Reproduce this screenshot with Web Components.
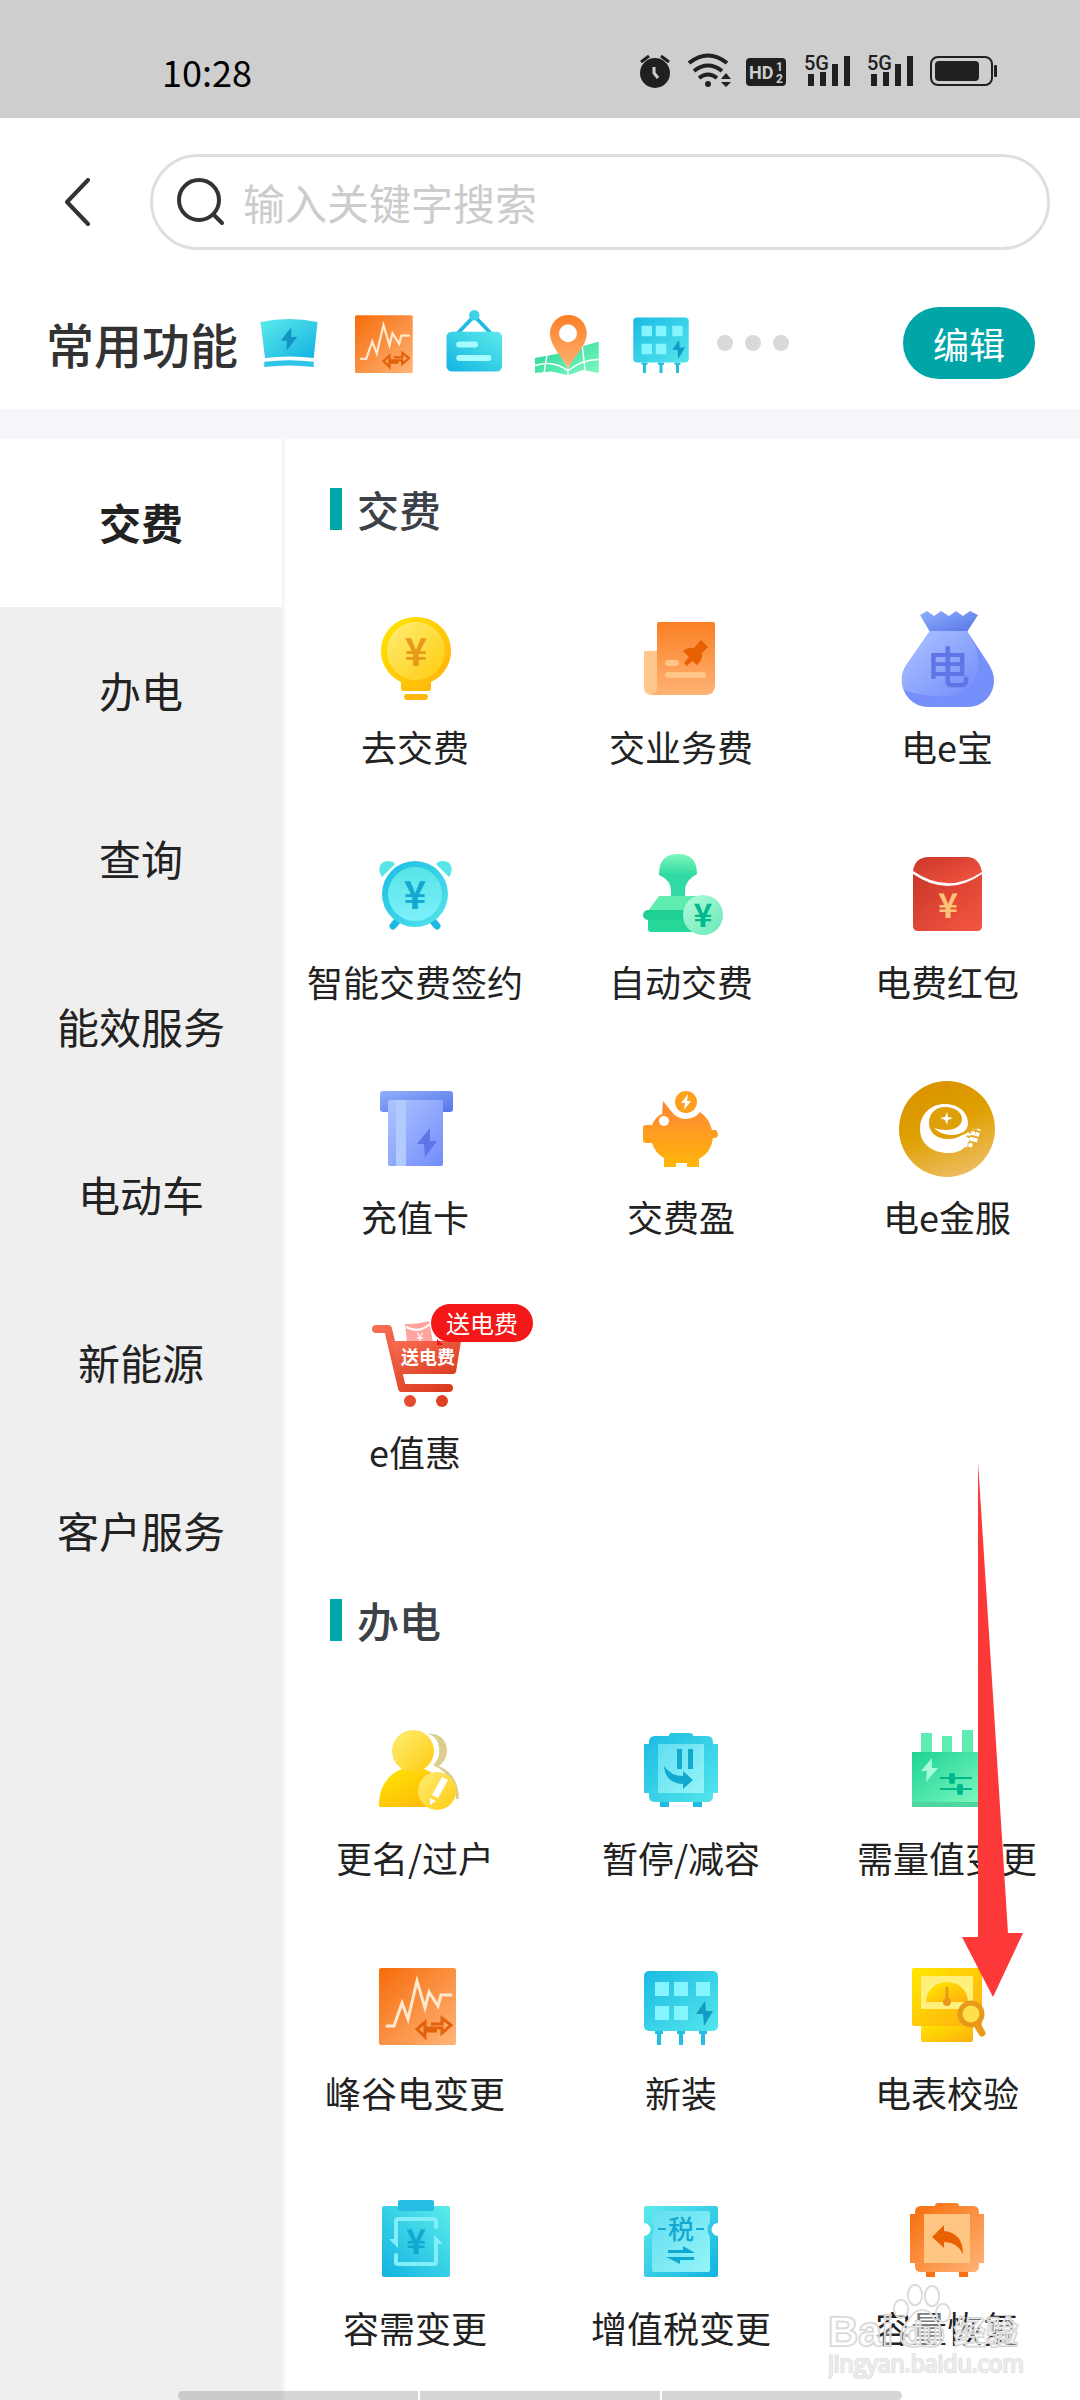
<!DOCTYPE html>
<html lang="zh-CN">
<head>
<meta charset="utf-8">
<meta name="viewport" content="width=device-width, initial-scale=1">
<title>常用功能</title>
<style>
  html, body {
    margin: 0;
    height: 100%;
  }
  body {
    font-family: "Noto Sans CJK SC", "Noto Sans", sans-serif;
    color: #222;
    background: #fff;
  }
</style>
</head>
<body>
<app-shell>
  <status-bar slot="top">10:28</status-bar>
  <search-header slot="top" placeholder="输入关键字搜索"></search-header>
  <shortcut-bar slot="top">
    <span slot="title">常用功能</span>
    <fn-icon name="basin"></fn-icon>
    <fn-icon name="wave"></fn-icon>
    <fn-icon name="board"></fn-icon>
    <fn-icon name="map"></fn-icon>
    <fn-icon name="install"></fn-icon>
    <span slot="action">编辑</span>
  </shortcut-bar>

  <side-menu slot="side">
    <menu-item active>交费</menu-item>
    <menu-item>办电</menu-item>
    <menu-item>查询</menu-item>
    <menu-item>能效服务</menu-item>
    <menu-item>电动车</menu-item>
    <menu-item>新能源</menu-item>
    <menu-item>客户服务</menu-item>
  </side-menu>

  <service-section>
    <span slot="title">交费</span>
    <service-tile icon="bulb">去交费</service-tile>
    <service-tile icon="doc">交业务费</service-tile>
    <service-tile icon="bag">电e宝</service-tile>
    <service-tile icon="alarm">智能交费签约</service-tile>
    <service-tile icon="stamp">自动交费</service-tile>
    <service-tile icon="packet">电费红包</service-tile>
    <service-tile icon="card">充值卡</service-tile>
    <service-tile icon="pig">交费盈</service-tile>
    <service-tile icon="gold">电e金服</service-tile>
    <service-tile icon="cart" badge="送电费">e值惠</service-tile>
  </service-section>

  <service-section>
    <span slot="title">办电</span>
    <service-tile icon="person">更名/过户</service-tile>
    <service-tile icon="pause">暂停/减容</service-tile>
    <service-tile icon="demand">需量值变更</service-tile>
    <service-tile icon="wave">峰谷电变更</service-tile>
    <service-tile icon="install">新装</service-tile>
    <service-tile icon="meter">电表校验</service-tile>
    <service-tile icon="clipboard">容需变更</service-tile>
    <service-tile icon="tax">增值税变更</service-tile>
    <service-tile icon="restore">容量恢复</service-tile>
  </service-section>

  <pointer-arrow slot="over"></pointer-arrow>
  <water-mark slot="over"></water-mark>
  <gesture-bar slot="over"></gesture-bar>
</app-shell>

<script>
(function() {
  // every icon instance gets its own copy, ids are scoped to the shadow root
  const DEFS = `
    <defs>
      <linearGradient id="yellow" x1="0" y1="0" x2="1" y2="1"><stop offset="0" stop-color="#ffe900"/><stop offset="1" stop-color="#ffae0e"/></linearGradient>
      <linearGradient id="lemon" x1="0" y1="0" x2="1" y2="1"><stop offset="0" stop-color="#ffee75"/><stop offset="1" stop-color="#ffcb0f"/></linearGradient>
      <linearGradient id="orange" x1="0" y1="0" x2="1" y2="1"><stop offset="0" stop-color="#f66c0a"/><stop offset="1" stop-color="#ffb478"/></linearGradient>
      <linearGradient id="peach" x1="0" y1="0" x2="0" y2="1"><stop offset="0" stop-color="#fa7f24"/><stop offset="1" stop-color="#ffb274"/></linearGradient>
      <linearGradient id="pigGrad" x1="0" y1="0" x2="0" y2="1"><stop offset="0" stop-color="#ff8538"/><stop offset="1" stop-color="#ffb60a"/></linearGradient>
      <linearGradient id="cyan" x1="0" y1="0" x2="1" y2="1"><stop offset="0" stop-color="#1abbe3"/><stop offset="1" stop-color="#55e6ec"/></linearGradient>
      <linearGradient id="cyanBack" x1="0" y1="0" x2="1" y2="1"><stop offset="0" stop-color="#5cebeb"/><stop offset="1" stop-color="#12b1e2"/></linearGradient>
      <linearGradient id="cyanUp" x1="0" y1="1" x2="1" y2="0"><stop offset="0" stop-color="#12b3e2"/><stop offset="1" stop-color="#5cebeb"/></linearGradient>
      <linearGradient id="cyanPale" x1="0" y1="0" x2="0" y2="1"><stop offset="0" stop-color="#57e4e6"/><stop offset="1" stop-color="#7df1fb"/></linearGradient>
      <linearGradient id="ice" x1="0" y1="0" x2="1" y2="1"><stop offset="0" stop-color="#62ddf2"/><stop offset="1" stop-color="#95f5f7"/></linearGradient>
      <linearGradient id="green" x1="0" y1="0" x2="1" y2="1"><stop offset="0" stop-color="#1bd393"/><stop offset="1" stop-color="#84fac3"/></linearGradient>
      <linearGradient id="greenDown" x1="0" y1="0" x2="0" y2="1"><stop offset="0" stop-color="#7ef7bd"/><stop offset="1" stop-color="#35dba2"/></linearGradient>
      <linearGradient id="mint" x1="0" y1="0" x2="1" y2="1"><stop offset="0" stop-color="#b4fbdc"/><stop offset="1" stop-color="#66e9b6"/></linearGradient>
      <linearGradient id="blue" x1="0" y1="0" x2="1" y2="1"><stop offset="0" stop-color="#90b0fd"/><stop offset="1" stop-color="#5474e6"/></linearGradient>
      <linearGradient id="sky" x1="0" y1="0" x2="1" y2="1"><stop offset="0" stop-color="#aec5ff"/><stop offset="1" stop-color="#728cfb"/></linearGradient>
      <linearGradient id="red" x1="0" y1="0" x2="1" y2="1"><stop offset="0" stop-color="#c93728"/><stop offset="1" stop-color="#f65643"/></linearGradient>
      <linearGradient id="cartGrad" x1="0" y1="0" x2="1" y2="1"><stop offset="0" stop-color="#f86e52"/><stop offset="1" stop-color="#da3b20"/></linearGradient>
      <linearGradient id="goldGrad" x1="0.3" y1="0" x2="0.7" y2="1"><stop offset="0.1" stop-color="#da9500"/><stop offset="0.45" stop-color="#dfa000"/><stop offset="1" stop-color="#edbe65"/></linearGradient>
    </defs>`;

  const yen = (x, y, size, fill) =>
    `<text x="${x}" y="${y}" font-size="${size}" font-weight="700" text-anchor="middle" fill="${fill}">¥</text>`;

  // cabinet outline shared by the pause and restore icons
  const cabinet = (grad, inner, foot) => `
    <path fill="${foot}" d="M27 78h9v7h-9zM60 78h9v7h-9z"/>
    <path fill="url(#${grad})" d="M36 14q0-3 3-3h18q3 0 3 3h14q6 0 6 6v2h5v49h-5v3q0 6-6 6H22q-6 0-6-6v-3h-5V22h5v-2q0-6 6-6z"/>
    <path fill="${inner}" d="M25 22h46v49H25z"/>`;

  const ICONS = {
    basin: `
      <path fill="url(#cyanBack)" d="M10 20Q48 12 86 20L81 68Q48 64 16 68z"/>
      <path fill="#2fc3e8" d="M15 73Q48 69 81 73V80Q48 76 15 80z"/>
      <path fill="#1594c4" d="M51 27L37 45H45V58L59 40H51z"/>`,
    wave: `
      <rect x="12" y="11" width="77" height="77" rx="2" fill="url(#orange)"/>
      <path fill="none" stroke="#ffe9cf" stroke-width="3" stroke-linecap="round" d="M20 69H27L35 46L41 62L50 24L58 51L62 35L71 49L74 38H84"/>
      <path fill="none" stroke="#e2620c" stroke-width="3" d="M64 67H75V61L84 68L75 76V71H58V65L50 72L58 80V74H70"/>`,
    board: `
      <path fill="none" stroke="#1fb9e4" stroke-width="5" d="M25 35L47 12L69 35"/>
      <circle cx="47" cy="11" r="7" fill="#3fd0e8"/>
      <rect x="10" y="33" width="74" height="53" rx="7" fill="url(#cyanUp)"/>
      <path fill="none" stroke="#a7fcff" stroke-width="8" stroke-linecap="round" d="M27 50H48M27 68H66"/>`,
    map: `
      <path fill="url(#green)" d="M4 68L36 62L48 82L62 54L89 46V88L68 84L48 91L26 86L4 88z"/>
      <path fill="none" stroke="#fff" stroke-width="2" d="M4 78Q28 70 48 85Q66 70 89 70M20 64L16 88M67 52L71 86M48 82V92"/>
      <path fill="url(#peach)" d="M48 82C42 68 24 53 24 35A24 24 0 0 1 73 35C73 53 54 68 48 82z"/>
      <circle cx="48" cy="35" r="12" fill="#fff"/>`,
    install: `
      <path fill="#24bde4" d="M22 74h8v3h-2v11h-4V77h-2zM44 74h8v3h-2v11h-4V77h-2zM66 74h8v3h-2v11h-4V77h-2z"/>
      <rect x="11" y="14" width="74" height="60" rx="5" fill="url(#cyan)"/>
      <path fill="#84f4ff" d="M22 25h14v14H22zM41 25h14v14H41zM63 25h14v14H63zM22 49h14v14H22zM41 49h14v14H41z"/>
      <path fill="#129bc6" d="M72 44L63 57H70L71 69L80 54H73z"/>`,
    bulb: `
      <path fill="url(#yellow)" d="M49 6A34 34 0 0 1 64 71V78Q64 80 62 80H36Q34 80 34 78V71A34 34 0 0 1 49 6z"/>
      <circle cx="49" cy="40" r="29" fill="url(#lemon)"/>
      <rect x="37" y="83" width="24" height="6" rx="3" fill="#ffb910"/>
      ${yen(49, 55, 38, "#e8991a")}`,
    doc: `
      <path fill="#ffc78a" d="M11 40H30V84H19Q11 84 11 76z"/>
      <path fill="url(#peach)" d="M26 11H80Q82 11 82 13V74Q82 84 72 84H18Q24 82 24 76V13Q24 11 26 11z"/>
      <path fill="none" stroke="#ffc584" stroke-width="6" stroke-linecap="round" d="M35 52H43M35 64H70"/>
      <path fill="#e86000" d="M68 29L75 36L69 42Q70 49 64 54L59 50L54 55L51 52L56 46L50 40Q55 36 61 37z"/>`,
    bag: `
      <path fill="url(#blue)" d="M21 4L28 0L35 5L42 0L50 5L57 0L64 5L71 0L79 4L68 21H31z"/>
      <path fill="#7690fb" d="M31 20H68L89 52Q95 61 95 69A26 26 0 0 1 69 96H29A26 26 0 0 1 3 69Q3 60 8 53z"/>
      <path fill="url(#sky)" d="M31 20H68L76 34Q80 46 79 57Q75 81 49 85Q24 86 5 79Q-1 66 8 53z"/>
      <text x="49" y="73" font-size="44" font-weight="500" text-anchor="middle" fill="#5f74e6">电</text>`,
    alarm: `
      <path fill="#5ae5e8" d="M28 18L15 31C10 24 12 15 21 15C24 15 27 16 28 18zM69 18L82 31C87 24 85 15 76 15C73 15 70 16 69 18z"/>
      <path fill="none" stroke="#1fb9e4" stroke-width="7" stroke-linecap="round" d="M31 74L26 80M65 74L70 80"/>
      <circle cx="48" cy="48" r="33" fill="url(#cyan)"/>
      <circle cx="48" cy="48" r="27" fill="url(#cyanPale)"/>
      ${yen(48, 63, 38, "#12a9d0")}`,
    stamp: `
      <path fill="#31d9a5" d="M26 28H64Q52 34 52 45V52H38V45Q38 34 26 29z"/>
      <path fill="url(#greenDown)" d="M26 28Q26 8 45 8Q64 8 64 28z"/>
      <path fill="#5fecb1" d="M26 50H64L77 65H15z"/>
      <rect x="15" y="66" width="62" height="20" rx="3" fill="#26d898"/>
      <rect x="10" y="64" width="70" height="10" rx="5" fill="#1fd195"/>
      <circle cx="70" cy="69" r="20" fill="url(#mint)"/>
      ${yen(70, 81, 32, "#00b88c")}`,
    packet: `
      <path fill="url(#red)" d="M14 28V80Q14 85 19 85H78Q83 85 83 80V28Q49 52 14 28z"/>
      <path fill="url(#red)" d="M14 25Q16 11 30 11H68Q80 11 83 26Q49 49 14 25z"/>
      ${yen(49, 72, 34, "#ffc277")}`,
    card: `
      <rect x="13" y="10" width="73" height="21" rx="3" fill="url(#blue)"/>
      <rect x="21" y="19" width="55" height="66" rx="2" fill="url(#sky)"/>
      <path fill="#b2cbff" d="M29 19h10v66H29z"/>
      <path fill="#5f74e6" d="M63 47L50 63H57L58 76L70 60H63z"/>`,
    pig: `
      <path fill="url(#pigGrad)" d="M30 20L38 30Q44 38 53 38Q63 37 67 31Q76 37 79 49H83Q87 54 83 57H80Q78 72 66 78V86H54V82H43V86H31V77Q22 72 19 62H13Q10 62 10 59V47Q10 44 13 44H19Q22 36 29 33z"/>
      <circle cx="31" cy="40" r="5" fill="#fff"/>
      <circle cx="53" cy="21" r="11" fill="#ffa01c"/>
      <path fill="#fff" d="M55 13L48 22H52L51 29L58 20H54z"/>`,
    gold: `
      <circle cx="48" cy="48" r="48" fill="url(#goldGrad)"/>
      <path fill="#fff" d="M46 23C60 23 69 32 69 42C69 50 62 55 52 56Q60 57 70 51L66 58L70 60L66 66Q60 72 50 72C32 72 21 62 21 48C21 33 32 23 46 23z"/>
      <path fill="#de9f08" d="M46 26C56 26 63 31 63 38C63 46 54 49 47 49Q40 49 35 47Q42 54 52 54Q62 54 68 48Q62 58 49 58C37 58 30 51 30 42C30 32 37 26 46 26z"/>
      <path fill="#fff" d="M48 31L49 36L54 37L49 39L48 44L46 39L41 37L46 36z"/>
      <path fill="none" stroke="#fff" stroke-width="4" stroke-dasharray="4 2" d="M66 66L70 52M71 66L75 48M76 61L80 48"/>`,
    cart: `
      <path fill="#ffa5a0" d="M38 8Q52 8 62 5L66 26H40z"/>
      <path fill="none" stroke="#fff" stroke-width="2" d="M39 11Q52 18 63 8"/>
      <text x="53" y="25" font-size="12" text-anchor="middle" fill="#fff">¥</text>
      <path fill="none" stroke="url(#cartGrad)" stroke-width="8" stroke-linecap="round" stroke-linejoin="round" d="M9 13H21L35 72H82"/>
      <path fill="url(#cartGrad)" d="M24 25H94L89 56Q88 58 86 58H32z"/>
      <circle cx="43" cy="85" r="6" fill="#e44b30"/>
      <circle cx="75" cy="85" r="6" fill="#de4024"/>
      <text x="61" y="48" font-size="18" font-weight="700" text-anchor="middle" fill="#fff">送电费</text>`,
    person: `
      <path fill="#dccf8e" d="M60 12C74 10 80 20 80 28C80 35 77 40 72 44C84 49 92 60 92 77H89C88 60 80 50 66 43C72 38 73 30 72 26C71 18 67 13 60 12z"/>
      <path fill="url(#yellow)" d="M12 85V82C12 60 28 45 46 45S80 60 80 82V85z"/>
      <circle cx="46" cy="29" r="21" fill="url(#lemon)"/>
      <circle cx="70" cy="69" r="19" fill="url(#lemon)"/>
      <path fill="#fff" d="M75 55L81 58L71 76L65 73zM63 76L69 79L63 83z"/>`,
    pause: `
      ${cabinet("cyan", "url(#ice)", "#1fb9e4")}
      <path fill="#12a9d0" d="M44 27h5v20h-5zM55 27h5v20h-5zM31 44Q38 54 50 54V49L60 58L50 67V62Q32 61 31 44z"/>`,
    demand: `
      <path fill="#5eecb2" d="M22 11h11v20H22zM43 14h10v17H43zM63 8h11v23H63z"/>
      <path fill="url(#green)" d="M13 30h72v55H13z"/>
      <path fill="#4fd6a0" d="M13 80h72v5H13z"/>
      <path fill="#a7fbd8" d="M33 36L22 49H28L27 60L39 46H33z"/>
      <path stroke="#00b88c" stroke-width="2" d="M41 56H73M41 67H73"/>
      <rect x="50" y="51" width="6" height="11" rx="2" fill="#00b88c"/>
      <rect x="58" y="62" width="6" height="11" rx="2" fill="#00b88c"/>`,
    meter: `
      <path fill="url(#yellow)" d="M22 66H74V83Q74 85 72 85H24Q22 85 22 83z"/>
      <rect x="13" y="11" width="70" height="58" rx="2" fill="url(#yellow)"/>
      <path fill="#fff07e" d="M22 19h52v33H22z"/>
      <path fill="url(#yellow)" d="M27 45A21 20 0 0 1 69 45z"/>
      <path stroke="#e8991a" stroke-width="3" d="M48 30V45"/>
      <circle cx="48" cy="45" r="4" fill="#e8991a"/>
      <path stroke="#e8991a" stroke-width="7" stroke-linecap="round" d="M77 66L83 76"/>
      <circle cx="72" cy="57" r="11" fill="#ffdf4a" stroke="#e8991a" stroke-width="5"/>`,
    clipboard: `
      <rect x="15" y="14" width="68" height="71" rx="2" fill="url(#cyanUp)"/>
      <rect x="31" y="8" width="36" height="11" rx="2" fill="#26bfe3"/>
      <path fill="none" stroke="#82eff8" stroke-width="4" stroke-linecap="round" d="M69 35V29Q69 27 67 27H31Q29 27 29 29V50M29 63V70Q29 72 31 72H67Q69 72 69 70V48"/>
      <path fill="#82eff8" d="M22 47H31V56zM67 43L76 52H67z"/>
      ${yen(49, 62, 34, "#12a9d0")}`,
    tax: `
      <path fill="url(#cyanBack)" d="M13 14H83Q85 14 85 16V31A6 6 0 0 0 85 44V83Q85 85 83 85H13Q11 85 11 83V44A6 6 0 0 0 11 31V16Q11 14 13 14z"/>
      <path fill="url(#ice)" d="M21 19H75Q77 19 77 21V30Q72 37 77 45V78Q77 80 75 80H21Q19 80 19 78V45Q24 37 19 30V21Q19 19 21 19z"/>
      <path fill="none" stroke="#12a9d0" stroke-width="2" d="M25 37H33M63 37H71"/>
      <path fill="#12a9d0" d="M35 58H50V54L62 61H35zM61 68H47V72L33 65H61z"/>
      <text x="48" y="47" font-size="26" font-weight="500" text-anchor="middle" fill="#12a9d0">税</text>`,
    restore: `
      ${cabinet("orange", "#ffc683", "#f8700f")}
      <path fill="#e86203" d="M33 45L45 33V39Q64 41 64 62Q58 50 45 50V56z"/>`
  };

  class BaseElement extends HTMLElement {
    constructor() {
      super();
      this.attachShadow({ mode: "open" });
    }
    connectedCallback() {
      this.shadowRoot.innerHTML = this.render();
    }
  }

  class AppShell extends BaseElement {
    render() {
      return `
        <style>
          :host {
            display: flex;
            flex-direction: column;
            position: relative;
            height: 100vh;
            overflow: hidden;
          }
          .body {
            flex: 1;
            min-height: 0;
            display: flex;
            border-top: 30px solid #f6f7fa;
          }
          main {
            flex: 1;
            min-width: 0;
            overflow-y: auto;
            scrollbar-width: none;
            box-shadow: inset 3px 0 #f5f8f8;
          }
        </style>
        <slot name="top"></slot>
        <div class="body">
          <slot name="side"></slot>
          <main><slot></slot></main>
        </div>
        <slot name="over"></slot>`;
    }
  }

  class StatusBar extends BaseElement {
    render() {
      const bars = x => `
        <text x="${x}" y="25" font-size="20" font-weight="500">5G</text>
        <path d="M${x + 4} 29h6v12h-6zM${x + 16} 27h6v14h-6zM${x + 28} 19h6v22h-6zM${x + 40} 11h6v30h-6z"/>`;
      return `
        <style>
          :host {
            display: flex;
            align-items: center;
            justify-content: space-between;
            height: 118px;
            padding: 24px 82px 0 162px;
            box-sizing: border-box;
            background: #cecece;
            color: #000;
            font-size: 36px;
            font-weight: 400;
            line-height: 50px;
          }
          svg {
            fill: #202020;
            font-family: "Liberation Sans Narrow", Roboto, sans-serif;
          }
        </style>
        <time><slot></slot></time>
        <svg width="358" height="52" viewBox="0 0 358 52" aria-hidden="true">
          <circle cx="15" cy="28" r="15"/>
          <path d="M1 17L9 11M29 17L21 11" stroke="#202020" stroke-width="3"/>
          <path d="M14 22V28L18 33" fill="none" stroke="#cecece" stroke-width="3"/>
          <path d="M49 18Q68 3 87 18M54 26Q68 15 82 26M59 33Q68 26 77 33" fill="none" stroke="#202020" stroke-width="4"/>
          <circle cx="68" cy="39" r="3"/>
          <path d="M86 28l5 6H81zM86 42l5-5H81z"/>
          <rect x="106" y="13" width="40" height="28" rx="4"/>
          <text x="109" y="34" font-size="18" font-weight="700" fill="#cecece">HD</text>
          <text x="136" y="26" font-size="12" font-weight="700" fill="#cecece">1</text>
          <text x="136" y="38" font-size="12" font-weight="700" fill="#cecece">2</text>
          ${bars(164)}
          ${bars(227)}
          <rect x="291" y="12" width="61" height="28" rx="7" fill="none" stroke="#202020" stroke-width="2"/>
          <rect x="295" y="16" width="44" height="20" rx="4"/>
          <rect x="354" y="20" width="3" height="12" rx="1"/>
        </svg>`;
    }
  }

  class SearchHeader extends BaseElement {
    render() {
      return `
        <style>
          :host {
            display: flex;
            align-items: center;
            padding: 36px 30px 0 54px;
          }
          button {
            width: 48px;
            height: 48px;
            margin-right: 48px;
            padding: 0;
            border: 0;
            background: none;
          }
          svg {
            display: block;
            flex: none;
            fill: none;
            stroke: #333;
            stroke-width: 4;
            stroke-linecap: round;
            stroke-linejoin: round;
          }
          label {
            flex: 1;
            display: flex;
            align-items: center;
            gap: 18px;
            height: 96px;
            padding: 0 24px;
            box-sizing: border-box;
            border: 3px solid #dfdfdf;
            border-radius: 48px;
          }
          input {
            flex: 1;
            min-width: 0;
            padding: 0;
            border: 0;
            outline: 0;
            background: none;
            color: #222;
            font: inherit;
            font-size: 42px;
            line-height: 60px;
          }
          input::placeholder { color: #ccc; }
        </style>
        <button type="button" aria-label="返回">
          <svg width="48" height="48" viewBox="0 0 48 48"><path d="M34 2L13 24L34 46"/></svg>
        </button>
        <label>
          <svg width="48" height="48" viewBox="0 0 48 48"><circle cx="22" cy="22" r="20"/><path d="M37 37L45 45"/></svg>
          <input type="search" aria-label="${this.getAttribute("placeholder")}" placeholder="${this.getAttribute("placeholder")}">
        </label>`;
    }
  }

  class ShortcutBar extends BaseElement {
    render() {
      return `
        <style>
          :host {
            --icon-size: 72px;
            display: flex;
            align-items: center;
            height: 159px;
            padding: 27px 45px 0 46px;
            box-sizing: border-box;
          }
          .wrap {
            flex: 1;
            display: flex;
            align-items: center;
          }
          h1 {
            margin: 0 15px 0 0;
            color: #333;
            font-size: 48px;
            font-weight: 500;
            line-height: 68px;
          }
          .icons, .dots {
            display: flex;
            gap: 21px;
          }
          .dots {
            gap: 12px;
            margin-left: 20px;
          }
          .dots i {
            width: 16px;
            height: 16px;
            border-radius: 50%;
            background: #d9d9d9;
          }
          button {
            width: 132px;
            height: 72px;
            padding: 0;
            border: 0;
            border-radius: 36px;
            background: #00a6a7;
            color: #fff;
            font: inherit;
            font-size: 36px;
            line-height: 50px;
          }
        </style>
        <div class="wrap">
          <h1><slot name="title"></slot></h1>
          <div class="icons"><slot></slot></div>
          <div class="dots"><i></i><i></i><i></i></div>
        </div>
        <button type="button"><slot name="action"></slot></button>`;
    }
  }

  class SideMenu extends BaseElement {
    render() {
      return `
        <style>
          :host {
            display: block;
            width: 282px;
            flex: none;
            background: #efefef;
          }
        </style>
        <nav><slot></slot></nav>`;
    }
  }

  class MenuItem extends BaseElement {
    render() {
      return `
        <style>
          :host { display: block; }
          a {
            display: flex;
            align-items: center;
            justify-content: center;
            height: 168px;
            padding-bottom: 2px;
            box-sizing: border-box;
            color: #222;
            font-size: 42px;
            line-height: 60px;
            text-decoration: none;
          }
          :host([active]) a {
            background: #fff;
            font-weight: 700;
          }
        </style>
        <a href="#"><slot></slot></a>`;
    }
  }

  class ServiceSection extends BaseElement {
    render() {
      return `
        <style>
          :host {
            display: block;
            padding-bottom: 20px;
          }
          h2 {
            display: flex;
            align-items: center;
            gap: 15px;
            height: 42px;
            margin: 0;
            padding: 49px 0 60px 48px;
            color: #3b4147;
            font-size: 42px;
            font-weight: 500;
            line-height: 42px;
          }
          h2::before {
            content: "";
            width: 12px;
            height: 42px;
            background: #00a6a7;
          }
          .grid {
            display: grid;
            grid-template-columns: repeat(3, 1fr);
          }
        </style>
        <h2><slot name="title"></slot></h2>
        <div class="grid"><slot></slot></div>`;
    }
  }

  class ServiceTile extends BaseElement {
    render() {
      const badge = this.getAttribute("badge");
      return `
        <style>
          :host { display: block; }
          a {
            display: flex;
            flex-direction: column;
            align-items: center;
            gap: 14px;
            padding: 21px 0 54px;
            color: #222;
            font-size: 36px;
            line-height: 50px;
            white-space: nowrap;
            text-decoration: none;
          }
          .icon { position: relative; }
          .badge {
            position: absolute;
            left: 64px;
            top: -12px;
            padding: 0 15px;
            border-radius: 19px;
            background: #f31717;
            color: #fff;
            font-size: 24px;
            line-height: 38px;
          }
          .badge::before {
            content: "";
            position: absolute;
            left: 6px;
            bottom: -3px;
            border: 6px solid transparent;
            border-left-color: #f31717;
            border-bottom: 0;
          }
        </style>
        <a href="#">
          <span class="icon">
            <fn-icon name="${this.getAttribute("icon")}"></fn-icon>
            ${badge ? `<span class="badge">${badge}</span>` : ""}
          </span>
          <span><slot></slot></span>
        </a>`;
    }
  }

  class FnIcon extends BaseElement {
    render() {
      return `
        <style>
          :host {
            display: block;
            width: var(--icon-size, 96px);
            height: var(--icon-size, 96px);
          }
          svg {
            display: block;
            width: 100%;
            height: 100%;
            overflow: visible;
          }
        </style>
        <svg viewBox="0 0 96 96" aria-hidden="true">${DEFS}${ICONS[this.getAttribute("name")]}</svg>`;
    }
  }

  class PointerArrow extends BaseElement {
    render() {
      return `
        <style>
          :host {
            position: absolute;
            right: 57px;
            top: 1462px;
            pointer-events: none;
          }
          svg { display: block; }
        </style>
        <svg width="61" height="535" viewBox="0 0 61 535" aria-hidden="true">
          <path fill="#fc3838" d="M16 0L30 218L46 471H61L31 535L0 475H16z"/>
        </svg>`;
    }
  }

  class WaterMark extends BaseElement {
    render() {
      return `
        <style>
          :host {
            position: absolute;
            right: 54px;
            bottom: 14px;
            pointer-events: none;
          }
          svg {
            display: block;
            fill: #fff;
            fill-opacity: 0.4;
            stroke: #d4d4d4;
            stroke-width: 2;
            paint-order: stroke;
          }
        </style>
        <svg width="198" height="104" viewBox="0 0 198 104">
          <ellipse cx="87" cy="13" rx="7" ry="10"/>
          <ellipse cx="104" cy="14" rx="7" ry="10"/>
          <ellipse cx="73" cy="27" rx="7" ry="9"/>
          <ellipse cx="115" cy="31" rx="7" ry="9"/>
          <path d="M94 28Q103 28 107 38Q118 48 115 58Q111 67 94 64Q77 67 73 58Q71 48 81 38Q86 28 94 28z"/>
          <text x="0" y="64" font-size="42" font-weight="700" font-family="Liberation Sans, sans-serif">Bai</text>
          <text x="75" y="62" font-size="32" font-weight="700" font-family="Liberation Sans, sans-serif">du</text>
          <text x="126" y="62" font-size="32" font-weight="700">经验</text>
          <text x="0" y="90" font-size="23" font-family="Open Sans, sans-serif" stroke="#e2e2e2">jingyan.baidu.com</text>
        </svg>`;
    }
  }

  class GestureBar extends BaseElement {
    render() {
      return `
        <style>
          :host {
            position: absolute;
            left: 0;
            right: 0;
            bottom: 0;
            display: flex;
            gap: 2px;
            width: 67%;
            height: 9px;
            margin: 0 auto;
            border-radius: 5px;
            overflow: hidden;
            pointer-events: none;
          }
          i {
            flex: 1;
            background: rgba(120, 120, 120, 0.31);
          }
        </style>
        <i></i><i></i><i></i>`;
    }
  }

  customElements.define("fn-icon", FnIcon);
  customElements.define("app-shell", AppShell);
  customElements.define("status-bar", StatusBar);
  customElements.define("search-header", SearchHeader);
  customElements.define("shortcut-bar", ShortcutBar);
  customElements.define("side-menu", SideMenu);
  customElements.define("menu-item", MenuItem);
  customElements.define("service-section", ServiceSection);
  customElements.define("service-tile", ServiceTile);
  customElements.define("pointer-arrow", PointerArrow);
  customElements.define("water-mark", WaterMark);
  customElements.define("gesture-bar", GestureBar);
})();
</script>
</body>
</html>
